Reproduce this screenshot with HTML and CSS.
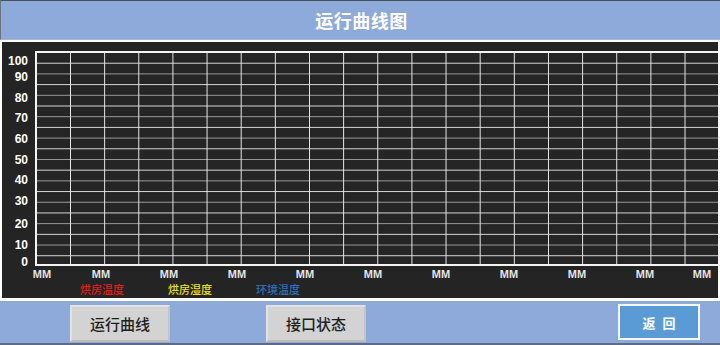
FILE: index.html
```html
<!DOCTYPE html>
<html lang="zh">
<head>
<meta charset="utf-8">
<link rel="stylesheet" href="styles.css">
</head>
<body>
<div class="screen">
  <header class="header"><h1 class="title">运行曲线图</h1></header>
  <section class="chart">
    <div class="yaxis">
      <span class="ylabel" style="top:12px">100</span>
      <span class="ylabel" style="top:28px">90</span>
      <span class="ylabel" style="top:49px">80</span>
      <span class="ylabel" style="top:69px">70</span>
      <span class="ylabel" style="top:90px">60</span>
      <span class="ylabel" style="top:111px">50</span>
      <span class="ylabel" style="top:131px">40</span>
      <span class="ylabel" style="top:152px">30</span>
      <span class="ylabel" style="top:175px">20</span>
      <span class="ylabel" style="top:196px">10</span>
      <span class="ylabel" style="top:213px">0</span>
    </div>
    <div class="plot"></div>
    <div class="xaxis">
      <span class="xlabel" style="left:43px">MM</span>
      <span class="xlabel" style="left:102px">MM</span>
      <span class="xlabel" style="left:170px">MM</span>
      <span class="xlabel" style="left:238px">MM</span>
      <span class="xlabel" style="left:306px">MM</span>
      <span class="xlabel" style="left:374px">MM</span>
      <span class="xlabel" style="left:442px">MM</span>
      <span class="xlabel" style="left:510px">MM</span>
      <span class="xlabel" style="left:578px">MM</span>
      <span class="xlabel" style="left:646px">MM</span>
      <span class="xlabel" style="left:703px">MM</span>
    </div>
    <div class="legend">
      <span class="legend-item red">烘房温度</span>
      <span class="legend-item yellow">烘房湿度</span>
      <span class="legend-item blue">环境温度</span>
    </div>
  </section>
  <footer class="footer">
    <button class="btn gray btn-curve">运行曲线</button>
    <button class="btn gray btn-iface">接口状态</button>
    <button class="btn back">返 回</button>
  </footer>
</div>
</body>
</html>
```
FILE: styles.css
```css
* { box-sizing: border-box; }
html, body { margin: 0; padding: 0; background: #ffffff; }
body { width: 720px; height: 345px; overflow: hidden; font-family: "Liberation Sans", "Noto Sans CJK SC", sans-serif; }
.screen { display: flex; flex-direction: column; width: 720px; height: 345px; }

.header {
  height: 40px;
  background: #8eaadb;
  border-top: 1px solid #4a4f5a;
  border-left: 1px solid #6b7280;
  border-bottom: 1px solid #a9b6cc;
  display: flex; align-items: center; justify-content: center;
}
.title {
  margin: 0;
  font-family: "Noto Sans CJK SC", sans-serif;
  font-size: 18px; font-weight: 700; color: #ffffff;
  letter-spacing: 0.5px;
  padding-left: 2px;
}

.chart {
  position: relative;
  margin: 2px 2px 0 2px;
  height: 256px;
  background: #242424;
  padding: 9px 0 0 33px;
}
.plot {
  height: 215px;
  border: 2px solid #f4f4f4;
  border-right: none;
  background-color: #252525;
  background-image:
    linear-gradient(to right, #e8e8e8 0 1px, transparent 1px),
    linear-gradient(to bottom, transparent 0 9.7px, #d8d8d8 9.7px 10.7px, transparent 10.7px 20.4px, #9a9a9a 20.4px 21.4px);
  background-size: 34.15px 100%, 100% 21.4px;
  background-position: 33px 0, 0 0;
}
.yaxis { position: absolute; left: 0; top: 0; width: 26px; height: 230px; }
.ylabel {
  position: absolute; right: 0;
  font-size: 12px; font-weight: 700; color: #ffffff; line-height: 14px;
}
.xaxis { position: relative; height: 14px; margin: 1px 0 0 -35px; }
.xlabel {
  position: absolute; top: 0;
  transform: translateX(-50%);
  font-size: 11px; font-weight: 700; color: #e4e4e4; line-height: 14px;
  margin-left: -1px;
}
.legend {
  display: flex; gap: 44px;
  margin: 1px 0 0 45px;
  font-family: "Noto Sans CJK SC", sans-serif;
  font-size: 11px; line-height: 14px; font-weight: 500;
}
.legend-item { width: 44px; white-space: nowrap; }
.red { color: #e0201c; }
.yellow { color: #e9e21c; }
.blue { color: #2f6fbf; }

.footer {
  position: relative;
  margin-top: 3px;
  flex: 1;
  background: #8eaadb;
  border-bottom: 2px solid #5d6b85;
  display: flex; align-items: center;
}
.btn {
  font-family: "Noto Sans CJK SC", sans-serif;
  cursor: pointer;
  padding: 0;
}
.gray {
  height: 37px; width: 100px;
  background: #d3d3d3;
  border: 2px solid #e2e2e2;
  border-right-color: #c4c4c4; border-bottom-color: #bdbdbd;
  color: #1e1e1e; font-size: 15px; font-weight: 500;
  margin-top: 2px;
}
.btn-curve { margin-left: 70px; }
.btn-iface { margin-left: 96px; }
.back {
  margin-left: auto; margin-right: 20px;
  width: 82px; height: 36px;
  background: #5b9bd5;
  border: 2px solid #f4f8ff;
  color: #ffffff; font-size: 13px; font-weight: 700;
  word-spacing: 4px;
}
```
